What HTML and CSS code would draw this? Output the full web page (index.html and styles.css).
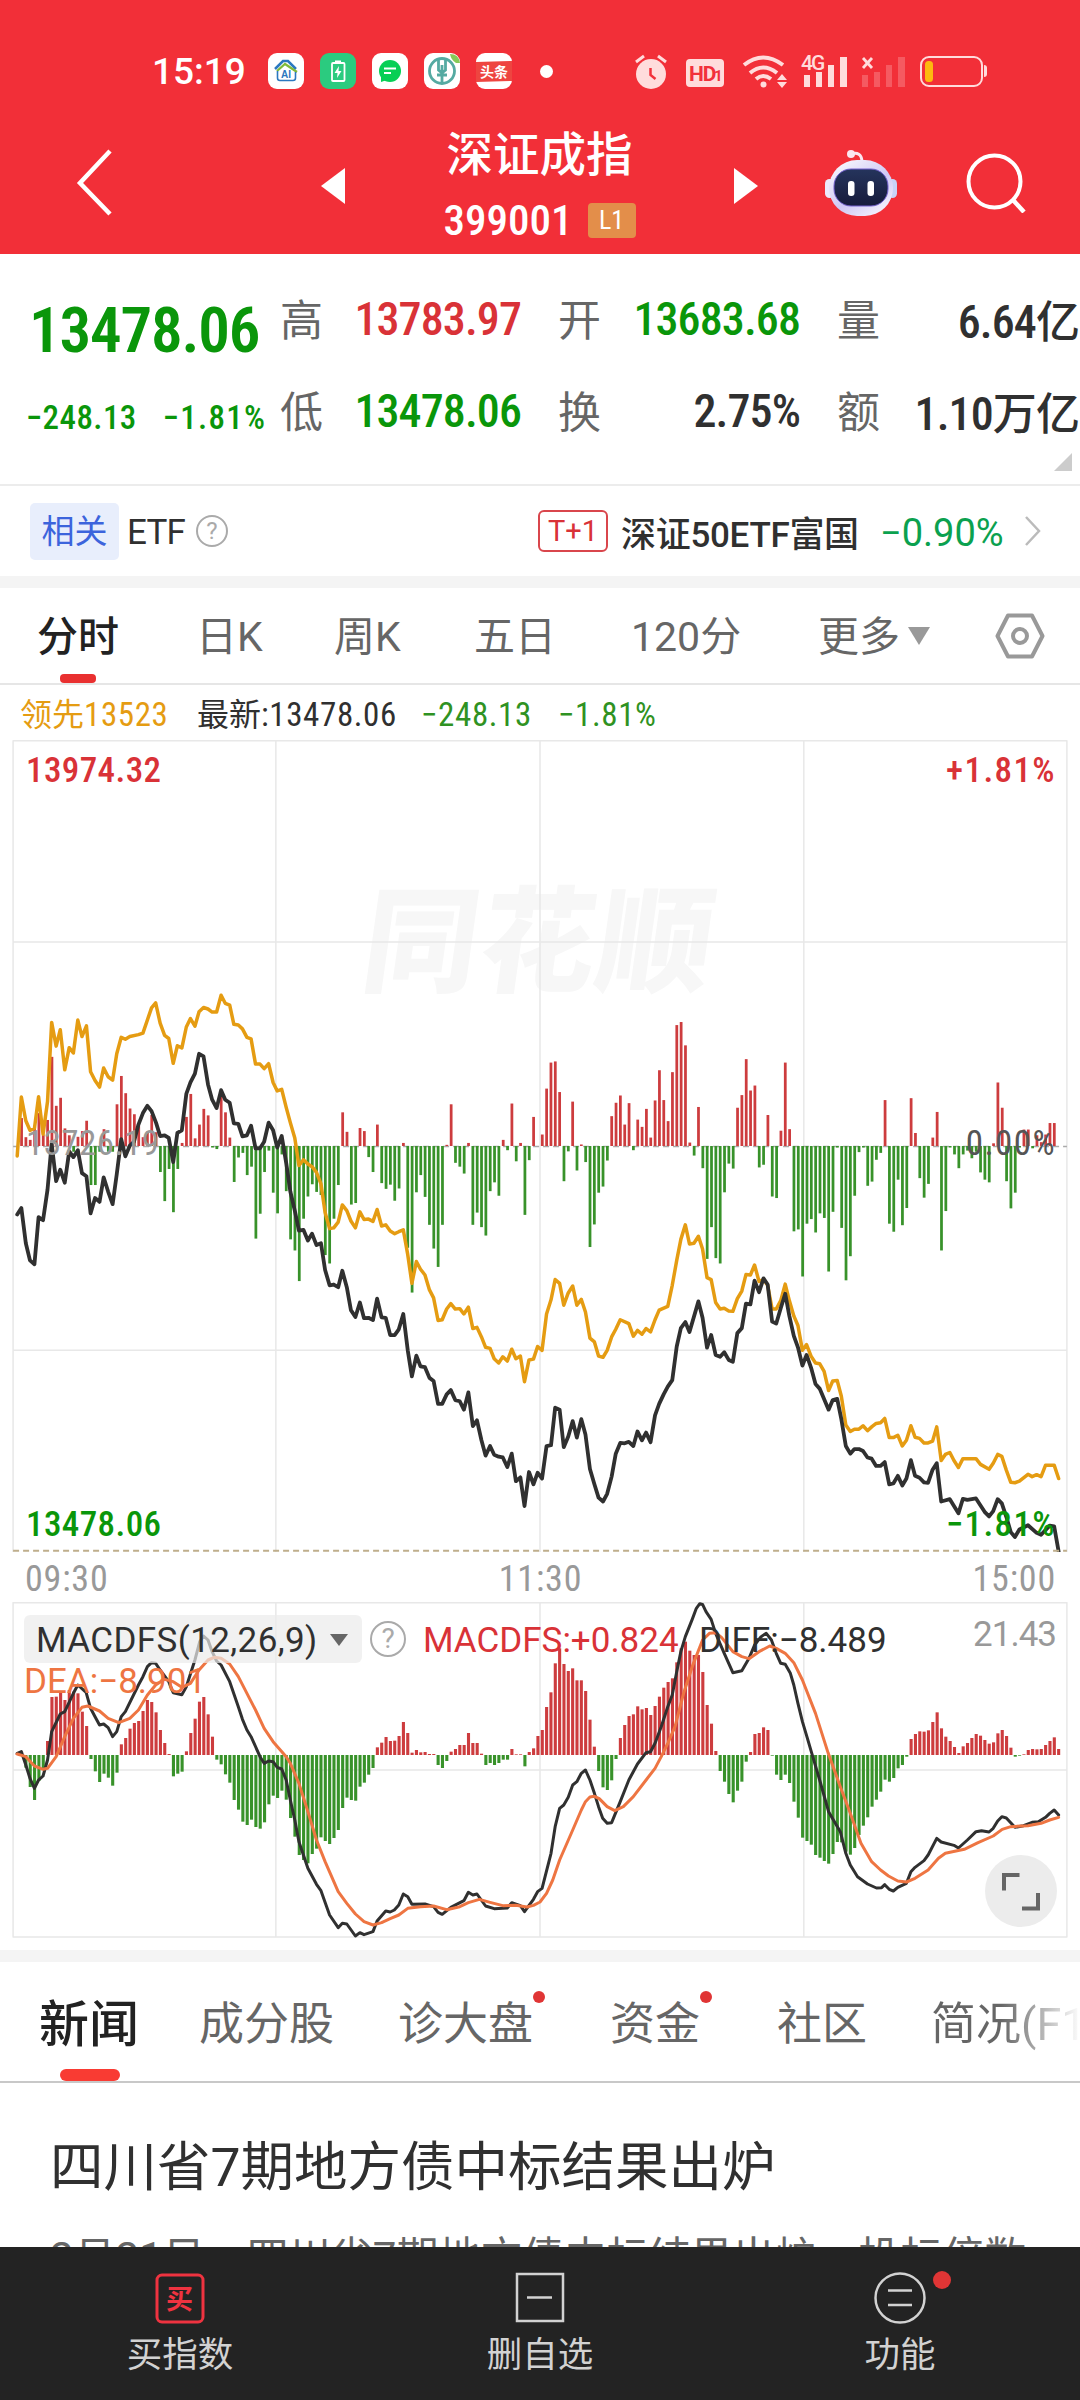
FILE: index.html
```html
<!DOCTYPE html>
<html lang="zh-CN">
<head>
    <meta charset="UTF-8">
    <title>深证成指 399001</title>
    <link rel="stylesheet" href="styles.css">
</head>
<body>
    <!-- Status bar + title -->
    <header class="header">
        <div class="status">
            <span class="clock">15:19</span>
            <div class="apps">
                <svg class="app" viewBox="0 0 36 36"><rect width="36" height="36" rx="9" fill="#fff"/><path d="M7 16L15 8h5l8 8" fill="none" stroke="#2b78c0" stroke-width="2.5"/><path d="M9 18l8-7 12 8" fill="none" stroke="#7fb93a" stroke-width="2.2"/><path d="M9.500 18v7q0 2.500 2.500 2.500h13q2.500 0 2.500-2.500v-6" fill="none" stroke="#2b78c0" stroke-width="1.600"/><text x="13" y="25" class="ai">AI</text></svg>
                <svg class="app" viewBox="0 0 36 36"><rect width="36" height="36" rx="9" fill="#2bcb7f"/><rect x="12" y="10" width="12.500" height="18" rx="1" fill="none" stroke="#fff" stroke-width="1.800"/><path d="M15 7.500h6v2h-6z" fill="#fff"/><path d="M19 13l-4.500 7h3l-.5 5 4.500-7h-3z" fill="#fff"/></svg>
                <svg class="app" viewBox="0 0 36 36"><rect width="36" height="36" rx="9" fill="#fff"/><circle cx="18" cy="18" r="11" fill="#07cf55"/><path d="M9 22v7l6-2z" fill="#07cf55"/><path d="M12 15.500h12M12 20h7" stroke="#fff" stroke-width="1.800"/></svg>
                <svg class="app" viewBox="0 0 36 36"><rect width="36" height="36" rx="9" fill="#fff"/><circle cx="18" cy="18" r="12.500" fill="none" stroke="#55aaa2" stroke-width="2.800"/><path d="M18 12v18M14.500 5v12l3.500 3 3.500-3V5M13 22h10" fill="none" stroke="#55aaa2" stroke-width="2.800"/><path d="M26 1q9 0 10 9l-4 0q-5-3-6-9z" fill="#86c957"/></svg>
                <svg class="app" viewBox="0 0 36 36"><rect width="36" height="36" rx="9" fill="#fff"/><path d="M0 9l36-1v20l-36 1z" fill="#ee4540"/><text x="4" y="24" class="toutiao">头条</text></svg>
                <i class="dot"></i>
            </div>
            <svg class="sys" viewBox="0 0 380 60" fill="#ffdcdc">
                <circle cx="31" cy="33" r="15"/><path d="M16 21l8-6M38 15l8 6" stroke="#ffdcdc" stroke-width="3"/><path d="M30.500 27v7l5 4" fill="none" stroke="#f2303a" stroke-width="2.500"/>
                <rect x="66" y="18" width="38" height="28" rx="4"/><text x="69" y="40" class="hd">HD</text><text x="94" y="40" class="hd small">1</text>
                <g fill="none" stroke="#ffdcdc" stroke-width="4"><path d="M124 24q19-15 39 0"/><path d="M130 32q13-11 27 0"/><path d="M136 38q7-6 15 0"/></g>
                <circle cx="143.500" cy="43.500" r="3"/><path d="M157 39l5-6 5 6zM157 41l5 6 5-6z"/>
                <text x="181" y="29" class="g4">4G</text>
                <path d="M184 34h6v12h-6zM196 31h6v15h-6zM208 24h6v22h-6zM220 16h7v30h-7z"/>
                <path d="M243 17l9 10M252 17l-9 10" stroke="#ffdcdc" stroke-width="2.800"/>
                <path d="M242 34h6v12h-6zM254 31h6v15h-6zM266 24h6v22h-6zM278 16h7v30h-7z" opacity=".25"/>
                <rect x="301" y="16" width="61" height="29" rx="8" fill="none" stroke="#ffdcdc" stroke-width="2"/><rect x="305" y="20" width="8" height="21" rx="3.500" fill="#fdb90f"/><path d="M364 24q3 0 3 3v6q0 3-3 3z"/>
            </svg>
        </div>
        <div class="titlebar">
            <svg class="back" viewBox="0 0 40 70"><path d="M35 3L5 35l30 31" fill="none" stroke="#fff" stroke-width="4.500"/></svg>
            <svg class="arrow" viewBox="0 0 24 36"><path d="M24 0v36L0 18z" fill="#fff"/></svg>
            <div class="name">
                <h1>深证成指</h1>
                <div class="code"><span>399001</span><em>L1</em></div>
            </div>
            <svg class="arrow" viewBox="0 0 24 36"><path d="M0 0v36l24-18z" fill="#fff"/></svg>
            <svg class="robot" viewBox="0 0 72 68">
                <defs>
                    <linearGradient id="head" x1="0" y1="0" x2=".8" y2="1"><stop offset="0" stop-color="#fff"/><stop offset=".6" stop-color="#cfc8f4"/><stop offset="1" stop-color="#f6f3ff"/></linearGradient>
                    <linearGradient id="face" x1="0" y1="0" x2="0" y2="1"><stop offset="0" stop-color="#25345c"/><stop offset="1" stop-color="#171b3c"/></linearGradient>
                </defs>
                <path d="M26 5q10-3 11 7" fill="none" stroke="#fbe6f0" stroke-width="3"/><circle cx="26" cy="5" r="4" fill="#fbe6f0"/>
                <rect y="30" width="9" height="19" rx="4.500" fill="#eceafb"/><rect x="63" y="30" width="9" height="19" rx="4.500" fill="#c9d3f8"/>
                <rect x="4" y="11" width="64" height="56" rx="28" fill="url(#head)"/>
                <rect x="9" y="20" width="54" height="37" rx="17" fill="url(#face)" stroke="#7461cf"/>
                <rect x="23" y="32" width="6.500" height="15" rx="3" fill="#fff"/><rect x="42.500" y="32" width="6.500" height="15" rx="3" fill="#fff"/>
            </svg>
            <svg class="search" viewBox="0 0 60 60"><circle cx="28.500" cy="28.500" r="26" fill="none" stroke="#fff" stroke-width="4"/><path d="M47 47l11 12" stroke="#fff" stroke-width="4.500"/></svg>
        </div>
    </header>

    <!-- Quote -->
    <section class="quote">
        <div class="last">
            <div class="price green">13478.06</div>
            <div class="change green"><span>−248.13</span><span>−1.81%</span></div>
        </div>
        <dl class="stats">
            <dt>高</dt><dd class="red">13783.97</dd>
            <dt>开</dt><dd class="green">13683.68</dd>
            <dt>量</dt><dd>6.64<b>亿</b></dd>
            <dt>低</dt><dd class="green">13478.06</dd>
            <dt>换</dt><dd>2.75%</dd>
            <dt>额</dt><dd>1.10<b>万亿</b></dd>
        </dl>
        <i class="corner"></i>
    </section>

    <!-- Related ETF -->
    <section class="etf">
        <span class="tag">相关</span>
        <span class="etf-label">ETF</span>
        <i class="help">?</i>
        <span class="t1">T+1</span>
        <span class="etf-name">深证50ETF富国</span>
        <span class="etf-change">−0.90%</span>
        <svg class="more" viewBox="0 0 18 32"><path d="M2 2l13 14L2 30" fill="none" stroke="#bbb" stroke-width="2.500"/></svg>
    </section>

    <!-- Period tabs -->
    <nav class="periods">
        <a class="active">分时</a><a>日K</a><a>周K</a><a>五日</a><a>120分</a><a class="dropdown">更多<i></i></a>
        <svg class="gear" viewBox="0 0 50 46"><path d="M13 2.500h24L47.500 23 37 43.500H13L2.500 23z" fill="none" stroke="#999" stroke-width="4" stroke-linejoin="round"/><circle cx="25" cy="23" r="7" fill="none" stroke="#999" stroke-width="4"/></svg>
    </nav>

    <!-- Intraday chart -->
    <div class="legend">
        <span class="lead">领先<i>13523</i></span><span class="now">最新<i>:13478.06</i></span><i class="down diff">−248.13</i><i class="down">−1.81%</i>
    </div>
    <section class="chart">
        <div class="watermark">同花顺</div>
        <svg id="minute" viewBox="0 -575 3136 2122" preserveAspectRatio="none">
            <path class="grid" d="M38-573H3098V1547M38-573V1547M38-47H3098M38 1020H3098M801-573V1547M1568-573V1547M2334-573V1547"/>
            <path class="grid zero" d="M38 487H3098"/>
            <g class="bars"></g>
            <polyline class="avg" points="50,512 62,358 75,420 87,445 100,440 112,357 125,455 138,370 150,163 163,225 175,182 188,287 201,229 213,243 226,157 238,200 251,172 263,292 276,315 289,332 301,282 314,305 327,314 339,245 352,202 364,207 377,200 402,195 415,191 440,125 452,112 465,165 478,197 490,205 503,270 515,224 528,230 541,175 553,153 566,173 578,135 591,124 604,128 616,136 629,136 642,92 654,113 667,118 679,168 692,170 704,180 717,202 729,206 742,272 755,272 767,284 780,271 793,320 805,342 818,338 831,385 843,425 856,465 868,537 881,522 894,533 906,540 919,555 932,585 944,660 957,702 969,700 982,685 994,640 1007,655 1019,682 1032,700 1045,658 1057,678 1070,677 1083,683 1095,652 1108,695 1120,692 1133,708 1146,715 1158,710 1171,705 1184,770 1196,845 1209,788 1221,808 1234,823 1247,862 1259,883 1272,942 1284,940 1297,912 1309,898 1322,912 1335,911 1347,925 1360,907 1373,963 1385,960 1398,985 1410,1012 1423,1015 1435,1042 1448,1053 1460,1037 1473,1048 1486,1017 1498,1042 1511,1035 1523,1102 1536,1045 1549,1043 1561,1010 1574,1020 1587,925 1600,888 1612,835 1625,845 1637,902 1650,870 1663,852 1675,902 1688,887 1700,920 1713,988 1726,998 1738,1035 1751,1038 1763,1020 1776,985 1788,965 1801,940 1826,950 1839,983 1851,968 1864,978 1876,963 1889,972 1902,940 1914,915 1939,905 1952,850 1965,785 1977,730 1990,692 2002,742 2015,740 2028,722 2040,755 2053,830 2065,835 2078,895 2091,912 2103,910 2116,917 2128,918 2141,885 2154,865 2166,822 2179,823 2191,797 2204,840 2217,835 2229,850 2242,912 2254,912 2267,890 2280,847 2292,890 2305,930 2317,955 2330,1020 2342,1005 2355,1035 2368,1053 2380,1055 2393,1075 2406,1125 2418,1100 2431,1099 2443,1140 2456,1215 2469,1232 2481,1226 2494,1226 2506,1217 2519,1230 2531,1220 2544,1211 2557,1209 2569,1198 2582,1248 2594,1248 2607,1242 2620,1270 2632,1255 2645,1217 2657,1247 2670,1250 2683,1262 2695,1262 2708,1257 2720,1220 2733,1308 2745,1292 2758,1287 2770,1308 2783,1326 2796,1303 2834,1303 2847,1318 2872,1331 2884,1315 2897,1292 2909,1297 2922,1333 2935,1365 2947,1366 2960,1362 2985,1344 2997,1350 3010,1345 3023,1350 3036,1320 3061,1320 3074,1355"/>
            <polyline class="index" points="50,665 62,648 75,740 87,785 100,795 112,672 125,680 138,600 150,480 163,578 175,548 188,582 201,500 213,515 226,497 238,557 251,565 263,662 276,622 289,632 301,568 314,605 327,638 339,560 352,468 364,513 377,485 389,475 402,430 415,400 428,381 440,395 453,425 465,460 478,458 490,465 503,528 515,452 528,445 541,350 553,320 566,297 578,245 591,252 604,325 616,365 629,387 642,340 654,365 667,373 679,427 692,428 704,461 717,458 729,433 742,492 755,492 767,475 780,425 793,445 805,490 818,460 831,530 843,605 856,655 868,707 881,705 894,733 906,715 919,745 932,740 944,810 957,850 969,848 982,855 994,812 1007,855 1019,915 1032,933 1045,895 1057,936 1070,935 1083,941 1095,885 1108,934 1120,935 1133,980 1146,980 1158,965 1171,925 1184,1020 1196,1088 1209,1034 1221,1062 1234,1064 1247,1092 1259,1100 1272,1160 1284,1160 1297,1135 1309,1124 1322,1150 1335,1153 1347,1175 1360,1130 1373,1218 1385,1203 1398,1255 1410,1295 1423,1270 1435,1293 1448,1298 1460,1300 1473,1325 1486,1290 1498,1362 1511,1352 1523,1427 1536,1338 1549,1370 1561,1340 1574,1355 1587,1270 1600,1268 1612,1170 1625,1175 1637,1273 1650,1245 1663,1205 1675,1248 1688,1200 1700,1240 1713,1330 1726,1370 1738,1405 1751,1415 1763,1395 1776,1350 1788,1290 1801,1262 1814,1263 1826,1259 1839,1270 1851,1232 1864,1255 1876,1235 1889,1260 1902,1190 1914,1160 1927,1135 1939,1115 1952,1098 1965,1010 1977,962 1990,946 2002,972 2028,892 2040,935 2053,1013 2065,980 2078,1032 2091,1037 2103,1025 2116,1045 2128,1050 2141,975 2154,962 2166,898 2179,900 2191,838 2204,868 2217,832 2229,848 2242,945 2254,950 2267,910 2280,872 2292,930 2305,982 2317,1012 2330,1060 2342,1032 2355,1065 2368,1108 2380,1120 2406,1175 2418,1150 2431,1147 2443,1200 2456,1270 2469,1290 2481,1278 2494,1278 2506,1283 2519,1300 2531,1303 2544,1322 2557,1322 2569,1312 2582,1370 2594,1368 2607,1348 2620,1373 2632,1355 2645,1307 2657,1348 2670,1353 2683,1365 2695,1366 2708,1332 2720,1315 2733,1415 2758,1409 2783,1446 2796,1408 2809,1411 2834,1407 2859,1442 2872,1454 2884,1440 2897,1409 2909,1420 2922,1455 2935,1495 2947,1508 2960,1488 2985,1477 3010,1497 3023,1502 3048,1478 3061,1480 3074,1546"/>
            <path class="low" d="M38 1544H3098"/>
        </svg>
        <span class="mark tl red">13974.32</span>
        <span class="mark tr red">+1.81%</span>
        <span class="mark ml">13726.19</span>
        <span class="mark mr">0.00%</span>
        <span class="mark bl green">13478.06</span>
        <span class="mark br green">−1.81%</span>
    </section>
    <div class="times"><span>09:30</span><span>11:30</span><span>15:00</span></div>

    <!-- MACD -->
    <section class="macd">
        <svg id="macd" viewBox="0 126 3136 1008" preserveAspectRatio="none">
            <path class="grid" d="M38 128H3098V1131H38zM38 630H3098M801 128V1131M1568 128V1131M2334 128V1131"/>
            <g class="bars"></g>
            <polyline class="line-diff" points="50,580 62,575 75,615 87,655 100,685 112,660 125,648 138,600 150,515 175,462 188,455 213,400 226,375 250,397 263,445 276,470 289,495 301,492 314,503 327,530 339,515 352,470 364,455 402,375 415,350 428,320 440,308 452,310 465,330 490,365 503,398 528,404 541,380 566,300 580,245 591,228 604,240 616,275 629,303 642,315 667,365 692,440 704,478 717,510 729,530 755,590 767,610 780,603 793,605 805,622 818,627 831,660 843,720 856,780 868,845 881,885 894,925 919,973 932,992 957,1065 982,1103 994,1090 1007,1092 1032,1128 1045,1118 1057,1124 1083,1115 1095,1083 1120,1053 1133,1056 1145,1050 1158,1035 1171,1002 1184,1010 1196,1033 1234,1032 1259,1040 1272,1057 1284,1063 1309,1042 1347,1022 1360,997 1373,1005 1385,1002 1410,1038 1435,1046 1473,1044 1486,1028 1511,1037 1523,1055 1549,1018 1561,995 1574,985 1600,880 1612,800 1625,745 1637,735 1650,712 1663,675 1675,665 1688,640 1700,630 1713,660 1726,700 1738,740 1750,775 1763,790 1776,788 1801,725 1826,660 1851,612 1876,578 1889,575 1902,550 1920,500 1939,440 1952,405 1965,335 1977,275 1990,230 2010,178 2022,145 2032,131 2040,133 2050,155 2065,178 2078,220 2103,280 2128,338 2154,332 2175,295 2191,255 2210,230 2225,220 2240,240 2254,280 2267,310 2280,313 2295,340 2305,375 2317,430 2330,485 2343,530 2360,590 2380,660 2406,755 2420,780 2440,815 2456,880 2469,915 2490,950 2519,972 2545,984 2560,983 2569,974 2582,988 2594,993 2607,982 2632,970 2645,935 2657,922 2683,902 2695,885 2720,835 2733,846 2770,856 2783,864 2809,840 2834,815 2850,812 2872,816 2884,805 2897,783 2909,770 2922,774 2947,802 2972,797 2997,787 3015,785 3036,772 3048,760 3061,750 3074,765"/>
            <polyline class="line-dea" points="50,582 75,590 100,618 125,628 138,625 163,590 188,530 213,475 238,442 255,438 289,453 314,475 345,488 377,475 402,450 428,405 452,375 478,358 503,365 528,382 553,370 578,330 604,300 622,292 642,295 667,312 692,350 717,400 742,450 767,505 793,545 831,590 843,610 868,670 894,755 919,840 944,905 982,995 1007,1030 1032,1062 1057,1085 1083,1095 1108,1088 1133,1076 1158,1065 1184,1045 1221,1040 1259,1038 1297,1049 1335,1040 1360,1028 1392,1018 1423,1027 1460,1037 1498,1036 1530,1041 1549,1036 1568,1026 1587,1000 1605,960 1625,900 1663,810 1688,750 1700,725 1713,711 1726,709 1740,716 1763,740 1785,752 1810,740 1839,710 1876,660 1902,625 1920,590 1939,550 1960,500 1985,400 2010,320 2040,240 2060,220 2078,218 2095,232 2128,275 2154,290 2175,296 2204,275 2235,258 2254,265 2280,280 2305,308 2330,360 2368,460 2405,580 2440,680 2469,760 2500,850 2531,905 2557,930 2580,948 2607,963 2632,966 2657,955 2695,930 2725,895 2745,880 2800,868 2840,848 2884,828 2910,808 2935,800 2985,797 3023,790 3048,780 3074,772"/>
        </svg>
        <div class="macd-info">
            <span class="picker"><span>MACDFS(12,26,9)</span><i></i></span>
            <i class="help big">?</i>
            <span class="v-macd red">MACDFS:+0.824</span>
            <span class="v-diff">DIFF:−8.489</span>
            <span class="v-dea">DEA:−8.901</span>
            <span class="v-max">21.43</span>
        </div>
        <svg class="full" viewBox="0 0 72 72"><circle cx="36" cy="36" r="36" fill="#ececec"/><path d="M34.500 20H19v15.500M53 38v15.500H37" fill="none" stroke="#666" stroke-width="4"/></svg>
    </section>

    <!-- News -->
    <nav class="tabs">
        <a class="active">新闻</a><a>成分股</a><a class="new">诊大盘</a><a class="new">资金</a><a>社区</a><a>简况(F1</a>
    </nav>
    <article class="news">
        <h2>四川省7期地方债中标结果出炉</h2>
        <p>2月21日，四川省7期地方债中标结果出炉，投标倍数</p>
    </article>

    <footer class="actions">
        <a>
            <svg viewBox="0 0 52 52"><rect x="3" y="3" width="46" height="47" rx="5" fill="none" stroke="#ef3340" stroke-width="3"/><text x="12" y="37" class="buy">买</text></svg>
            买指数
        </a>
        <a>
            <svg viewBox="0 0 52 52"><path d="M3 2h46v47H3zM13 25.500h25" fill="none" stroke="#d2d2d2" stroke-width="2.500"/></svg>
            删自选
        </a>
        <a class="new">
            <svg viewBox="0 0 52 52"><circle cx="26" cy="26" r="24.500" fill="none" stroke="#d2d2d2" stroke-width="2.500"/><path d="M14 18.500h24M14 33h24" stroke="#d2d2d2" stroke-width="2.500"/></svg>
            功能
        </a>
    </footer>

    <script src="chart.js"></script>
</body>
</html>
```
FILE: styles.css
```css
* {
    box-sizing: border-box;
}

body {
    margin: 0;
    width: 1080px;
    height: 2400px;
    overflow: hidden;
    display: flex;
    flex-direction: column;
    background: #fff;
    color: #303030;
    font-family: Roboto, "Noto Sans CJK SC", sans-serif;
}

i, em {
    font-style: normal;
}

.red { color: #d93237; }
.green { color: #0a960a; }

/* header */
.header {
    flex: none;
    height: 254px;
    padding-top: 41px;
    background: #f22f38;
    color: #fff;
}

.status {
    display: flex;
    align-items: center;
    height: 60px;
    padding: 0 80px 0 152px;
}

.clock {
    width: 116px;
    font-size: 37px;
    font-weight: 500;
}

.apps {
    display: flex;
    align-items: center;
    gap: 16px;
    width: 352px;
}

.app {
    width: 36px;
    height: 36px;
}

.dot {
    width: 13px;
    height: 13px;
    margin-left: 12px;
    border-radius: 50%;
    background: #fff;
}

.sys {
    width: 380px;
    height: 60px;
    flex: none;
}

.ai { font: bold 10px "Liberation Sans", sans-serif; fill: #2b78c0; }
.toutiao { font: bold 14px "Noto Sans CJK SC", sans-serif; fill: #fff; }
.hd { font: bold 21px Roboto, sans-serif; fill: #f2303a; letter-spacing: -1px; }
.hd.small { font-size: 15px; }
.g4 { font: 500 21px Roboto, sans-serif; letter-spacing: -2px; }

.titlebar {
    display: grid;
    grid-template-columns: 246px 24px 389px 91px 141px 60px;
    align-items: center;
    height: 130px;
    margin: 17px 0 0 75px;
}

.titlebar svg { margin-bottom: 6px; }
.back { width: 40px; height: 70px; }
.titlebar .arrow { width: 24px; height: 36px; margin: 0; }
.robot { width: 72px; height: 68px; }
.search { width: 60px; height: 60px; }

.name {
    padding-top: 6px;
    text-align: center;
}

.name h1 {
    margin: 0;
    font-size: 46.5px;
    line-height: 62px;
    font-weight: 500;
}

.code {
    display: flex;
    justify-content: center;
    align-items: center;
    gap: 15px;
    height: 68px;
    font-size: 43px;
    font-weight: 500;
    font-stretch: 86%;
}

.code em {
    width: 48px;
    height: 35px;
    border-radius: 4px;
    background: #e38e4a;
    font-size: 26px;
    font-weight: 400;
    line-height: 35px;
}

/* quote */
.quote {
    position: relative;
    flex: none;
    display: flex;
    height: 232px;
    border-bottom: 2px solid #ececec;
}

.last {
    width: 280px;
    padding: 39px 0 0 26px;
}

.price {
    padding-left: 3px;
    font-size: 63px;
    line-height: 76px;
    font-weight: 600;
    font-stretch: 86%;
    letter-spacing: -1.2px;
}

.change {
    display: flex;
    gap: 26px;
    margin-top: 27px;
    font-size: 33px;
    line-height: 44px;
    font-weight: 500;
    font-stretch: 86%;
    letter-spacing: .4px;
    white-space: nowrap;
}

.change span + span {
    letter-spacing: 1.3px;
}

.stats {
    display: grid;
    grid-template-columns: 42px 199px 80px 199px 80px 199px;
    grid-auto-rows: 92px;
    align-items: center;
    width: 799px;
    height: 184px;
    margin: 19px 0 0 0;
}

.stats dt {
    padding-bottom: 4px;
    font-size: 43px;
    color: #666;
    text-align: right;
}

.stats dd {
    margin: 0;
    text-align: right;
    font-size: 46px;
    font-weight: 500;
    font-stretch: 86%;
    letter-spacing: -.9px;
    white-space: nowrap;
}

.stats b {
    font-size: 44px;
    font-weight: 500;
}

.corner {
    position: absolute;
    right: 8px;
    bottom: 13px;
    border-left: 18px solid transparent;
    border-bottom: 18px solid #ccc;
}

/* etf */
.etf {
    flex: none;
    display: flex;
    align-items: center;
    height: 102px;
    padding: 0 38px 0 30px;
    border-bottom: 12px solid #f4f4f4;
    font-size: 35px;
    white-space: nowrap;
}

.tag {
    width: 89px;
    height: 57px;
    border-radius: 5px;
    background: #e8eefc;
    color: #3c64dc;
    font-size: 33px;
    line-height: 57px;
    text-align: center;
}

.etf-label {
    width: 77px;
    padding: 2px 0 0 8px;
    letter-spacing: -.8px;
}

.help {
    width: 32px;
    height: 32px;
    border: 2px solid #aaa;
    border-radius: 50%;
    color: #aaa;
    font-size: 24px;
    line-height: 28px;
    text-align: center;
}

.t1 {
    width: 70px;
    height: 42px;
    margin-left: auto;
    margin-right: 13px;
    border: 2px solid #d9464c;
    border-radius: 6px;
    color: #d93237;
    font-size: 29px;
    line-height: 39px;
    text-align: center;
}

.etf-name {
    width: 259px;
    font-weight: 500;
    font-size: 35px;
    letter-spacing: -.3px;
}

.etf-change {
    width: 144px;
    padding-top: 3px;
    color: #0ba14f;
    font-size: 38px;
}

.more {
    width: 18px;
    height: 32px;
}

/* period tabs */
.periods {
    flex: none;
    display: grid;
    grid-template-columns: 159px 138px 140px 157px 187px 177px 50px;
    align-items: center;
    height: 97px;
    padding-left: 37px;
    border-bottom: 2px solid #e6e6e6;
    font-size: 41px;
    color: #666;
}

.periods a {
    position: relative;
    padding-top: 3px;
    line-height: 92px;
}

.periods .active {
    color: #222;
    font-weight: 500;
}

.periods .active::after {
    content: "";
    position: absolute;
    left: 23px;
    bottom: 0;
    width: 36px;
    height: 9px;
    border-radius: 4px;
    background: #e93030;
}

.dropdown i {
    display: inline-block;
    margin-left: 8px;
    vertical-align: 6px;
    border: 11px solid transparent;
    border-top: 18px solid #999;
    border-bottom: 0;
}

.gear {
    width: 50px;
    height: 46px;
}

/* charts */
.legend {
    flex: none;
    display: flex;
    height: 55px;
    padding-left: 20px;
    font-size: 32px;
    line-height: 60px;
    white-space: nowrap;
}

.legend i {
    font-size: 33px;
    font-stretch: 86%;
    letter-spacing: .6px;
}

.lead { width: 177px; color: #e59c12; }
.now { width: 224px; }
.down { color: #2f9222; }
.diff { width: 137px; }

.chart {
    position: relative;
    flex: none;
    height: 812px;
}

.chart svg {
    position: relative;
    display: block;
    width: 1080px;
    height: 812px;
}

.watermark {
    position: absolute;
    left: 364px;
    top: 134px;
    font-size: 115px;
    line-height: 140px;
    font-weight: 900;
    letter-spacing: 2px;
    color: #f7f7f7;
    transform: skewX(-8deg);
}

.grid, .low, polyline {
    fill: none;
    vector-effect: non-scaling-stroke;
    stroke-linejoin: round;
    stroke-linecap: round;
}

.grid { stroke: #e8e8e8; stroke-width: 1.5; }
.zero { stroke: #aaa; stroke-dasharray: 6 4; stroke-linecap: butt; }
.low { stroke: #bfae8c; stroke-width: 2; stroke-dasharray: 6 4; stroke-linecap: butt; }
.avg { stroke: #e59c12; stroke-width: 3.5; }
.index { stroke: #303030; stroke-width: 3.8; }
.line-diff { stroke: #303030; stroke-width: 3; }
.line-dea { stroke: #ee7542; stroke-width: 3; }
.up-bar { fill: #cd3c3e; }
.down-bar { fill: #38922a; }

.mark {
    position: absolute;
    font-size: 35px;
    line-height: 40px;
    font-weight: 500;
    font-stretch: 86%;
    letter-spacing: .4px;
}

.tl, .ml, .bl { left: 26px; }
.tr, .mr, .br { right: 24px; letter-spacing: 1.4px; }
.tl, .tr { top: 11px; }
.ml, .mr { top: 384px; font-weight: 400; }
.bl, .br { bottom: 7px; }
.ml { color: #999; }
.mr { color: #555; }

.times {
    flex: none;
    display: flex;
    justify-content: space-between;
    height: 50px;
    padding: 0 24px 0 25px;
    color: #999;
    font-size: 36px;
    line-height: 54px;
    font-stretch: 86%;
    letter-spacing: .8px;
}

.macd {
    position: relative;
    flex: none;
    height: 348px;
}

#macd {
    display: block;
    width: 1080px;
    height: 336px;
}

.macd-info {
    position: absolute;
    left: 24px;
    top: 12px;
    width: 1032px;
    display: flex;
    align-items: center;
    flex-wrap: wrap;
    font-size: 35px;
    white-space: nowrap;
}

.picker {
    display: flex;
    align-items: center;
    justify-content: space-between;
    width: 338px;
    height: 48px;
    padding: 2px 14px 0 12px;
    border-radius: 6px;
    background: rgba(235, 235, 235, .7);
    letter-spacing: .4px;
}

.picker i {
    border: 9px solid transparent;
    border-top: 12px solid #666;
    border-bottom: 0;
}

.help.big {
    width: 36px;
    height: 36px;
    margin: 0 17px 0 8px;
    line-height: 32px;
    font-size: 28px;
}

.v-macd { width: 276px; padding-top: 2px; }
.v-diff { width: 200px; padding-top: 2px; }
.v-dea { order: 2; color: #ee7542; line-height: 34px; padding-top: 1px; }
.v-max { margin: 0 0 9px auto; color: #999; letter-spacing: -1px; }

.full {
    position: absolute;
    right: 23px;
    bottom: 23px;
    width: 72px;
    height: 72px;
}

/* bottom tabs */
.tabs {
    flex: none;
    display: flex;
    height: 133px;
    padding-left: 39px;
    border-top: 12px solid #f4f4f4;
    border-bottom: 2px solid #c8c8c8;
    font-size: 45px;
    line-height: 126px;
    color: #666;
    white-space: nowrap;
}

.tabs a {
    position: relative;
    flex: none;
    height: 119px;
    margin-right: 64px;
}

.tabs a:nth-child(3) { margin-right: 77px; }
.tabs a:nth-child(4) { margin-right: 77px; }

.tabs a:last-child {
    margin: 0;
    color: transparent;
    background: linear-gradient(90deg, #666 70px, #fff 150px);
    background-clip: text;
}

.tabs .active {
    margin-right: 60px;
    font-size: 50px;
    font-weight: 500;
    color: #222;
}

.tabs .active::after {
    content: "";
    position: absolute;
    left: 21px;
    bottom: 0;
    width: 60px;
    height: 12px;
    border-radius: 6px;
    background: #f93b33;
}

.new {
    position: relative;
}

.new::after {
    content: "";
    position: absolute;
    right: -12px;
    top: 29px;
    width: 12px;
    height: 12px;
    border-radius: 50%;
    background: #e03535;
}

.news {
    flex: none;
    height: 164px;
    padding: 45px 50px 0;
    overflow: hidden;
}

.news h2 {
    margin: 0;
    font-size: 53.5px;
    line-height: 80px;
    font-weight: 400;
    white-space: nowrap;
}

.news p {
    margin: 19px 0 0;
    font-size: 42px;
    line-height: 62px;
    color: #666;
    white-space: nowrap;
}

.actions {
    flex: none;
    display: grid;
    grid-template-columns: repeat(3, 1fr);
    height: 154px;
    background: #232323;
    color: #d2d2d2;
    font-size: 35.5px;
    line-height: 62px;
    text-align: center;
}

.actions a {
    padding-top: 25px;
}

.actions svg {
    display: block;
    width: 52px;
    height: 52px;
    margin: 0 auto;
}

.actions .new::after {
    right: 129px;
    top: 24px;
    width: 18px;
    height: 18px;
}

.buy {
    font: bold 27px "Noto Sans CJK SC", sans-serif;
    fill: #ef3340;
}
```
FILE: chart.js
```javascript
// one value per minute, positive = red
const minute = [0,73,23,16,45,86,30,68,233,105,126,46,28,-15,24,39,66,-102,-102,-15,44,-15,-15,109,183,138,98,83,52,23,38,81,36,-68,-144,-60,-173,-60,8,76,
    136,20,56,97,80,-4,-8,131,88,22,-94,-30,-18,-76,-54,-242,-177,-68,-12,-122,-176,-22,-118,-244,-273,-353,-190,-132,-100,-120,-128,-285,-307,-190,-102,88,37,-153,-149,47,
    39,-29,-68,56,-97,-112,-101,-143,-111,8,-266,-383,-121,-76,-133,-206,-268,-316,-206,3,109,-44,-54,-72,8,-206,-174,-212,-234,-118,-95,-130,16,-11,111,-40,8,-180,-37,76,
    0,30,150,218,221,141,-92,-14,116,-64,4,-42,-264,-205,-122,-106,-38,78,113,132,56,112,-11,69,50,97,22,119,198,120,65,193,316,324,263,9,-25,102,-58,-295,
    -212,-293,-307,-121,-46,-59,100,133,227,145,158,-56,-49,81,-132,-136,40,218,44,-223,-218,-341,-203,-191,-226,-176,-188,-328,-172,-4,-214,-351,-288,-130,-16,-4,-104,-93,-36,-18,
    120,-203,-224,-88,-207,-162,125,34,-84,-135,-99,22,89,-273,-170,-4,-22,-58,-22,-12,-32,-15,-69,-88,-95,7,166,100,-92,-163,-122,-4,43,43,-6,28,10,30,60,60,0];

const macd = [5,10,-38,-96,-135,-78,-40,42,174,175,187,165,195,190,185,130,87,-12,-49,-81,-56,-68,-92,-53,32,51,79,96,102,132,165,159,128,75,36,3,-64,-56,-50,11,
    66,109,160,174,122,55,-14,-28,-58,-83,-135,-164,-200,-210,-194,-216,-221,-202,-148,-122,-129,-107,-134,-189,-245,-300,-315,-325,-297,-281,-247,-258,-267,-249,-225,-159,-128,-135,-137,-95,
    -83,-59,-39,23,37,54,42,43,57,99,66,7,15,8,9,3,3,-30,-39,-18,10,18,30,30,66,36,36,4,-30,-24,-30,-24,-14,-14,18,2,2,-34,9,20,
    57,75,144,188,275,320,273,252,260,224,224,192,106,25,-48,-97,-105,-76,-12,51,90,117,122,146,137,141,120,147,175,202,219,230,278,320,340,313,300,300,249,150,
    94,12,-48,-80,-117,-142,-107,-80,-20,9,63,66,83,75,-2,-59,-75,-59,-84,-140,-188,-248,-258,-269,-300,-308,-318,-326,-297,-261,-262,-290,-299,-279,-240,-212,-187,-155,-134,-110,
    -74,-80,-69,-40,-30,-5,48,63,71,70,74,99,128,80,55,42,24,6,26,36,51,63,58,45,34,38,65,75,57,22,-5,-2,2,15,18,17,18,30,42,53,18];

function drawBars(selector, values, zero, width) {
    const group = document.querySelector(selector);
    values.forEach((value, i) => {
        const bar = document.createElementNS('http://www.w3.org/2000/svg', 'rect');
        bar.setAttribute('x', 50 + i * 12.6 - width / 2);
        bar.setAttribute('y', value > 0 ? zero - value : zero);
        bar.setAttribute('width', width);
        bar.setAttribute('height', Math.abs(value));
        bar.setAttribute('class', value > 0 ? 'up-bar' : 'down-bar');
        group.appendChild(bar);
    });
}

drawBars('#minute .bars', minute, 486, 8);
drawBars('#macd .bars', macd, 585, 9);
```
